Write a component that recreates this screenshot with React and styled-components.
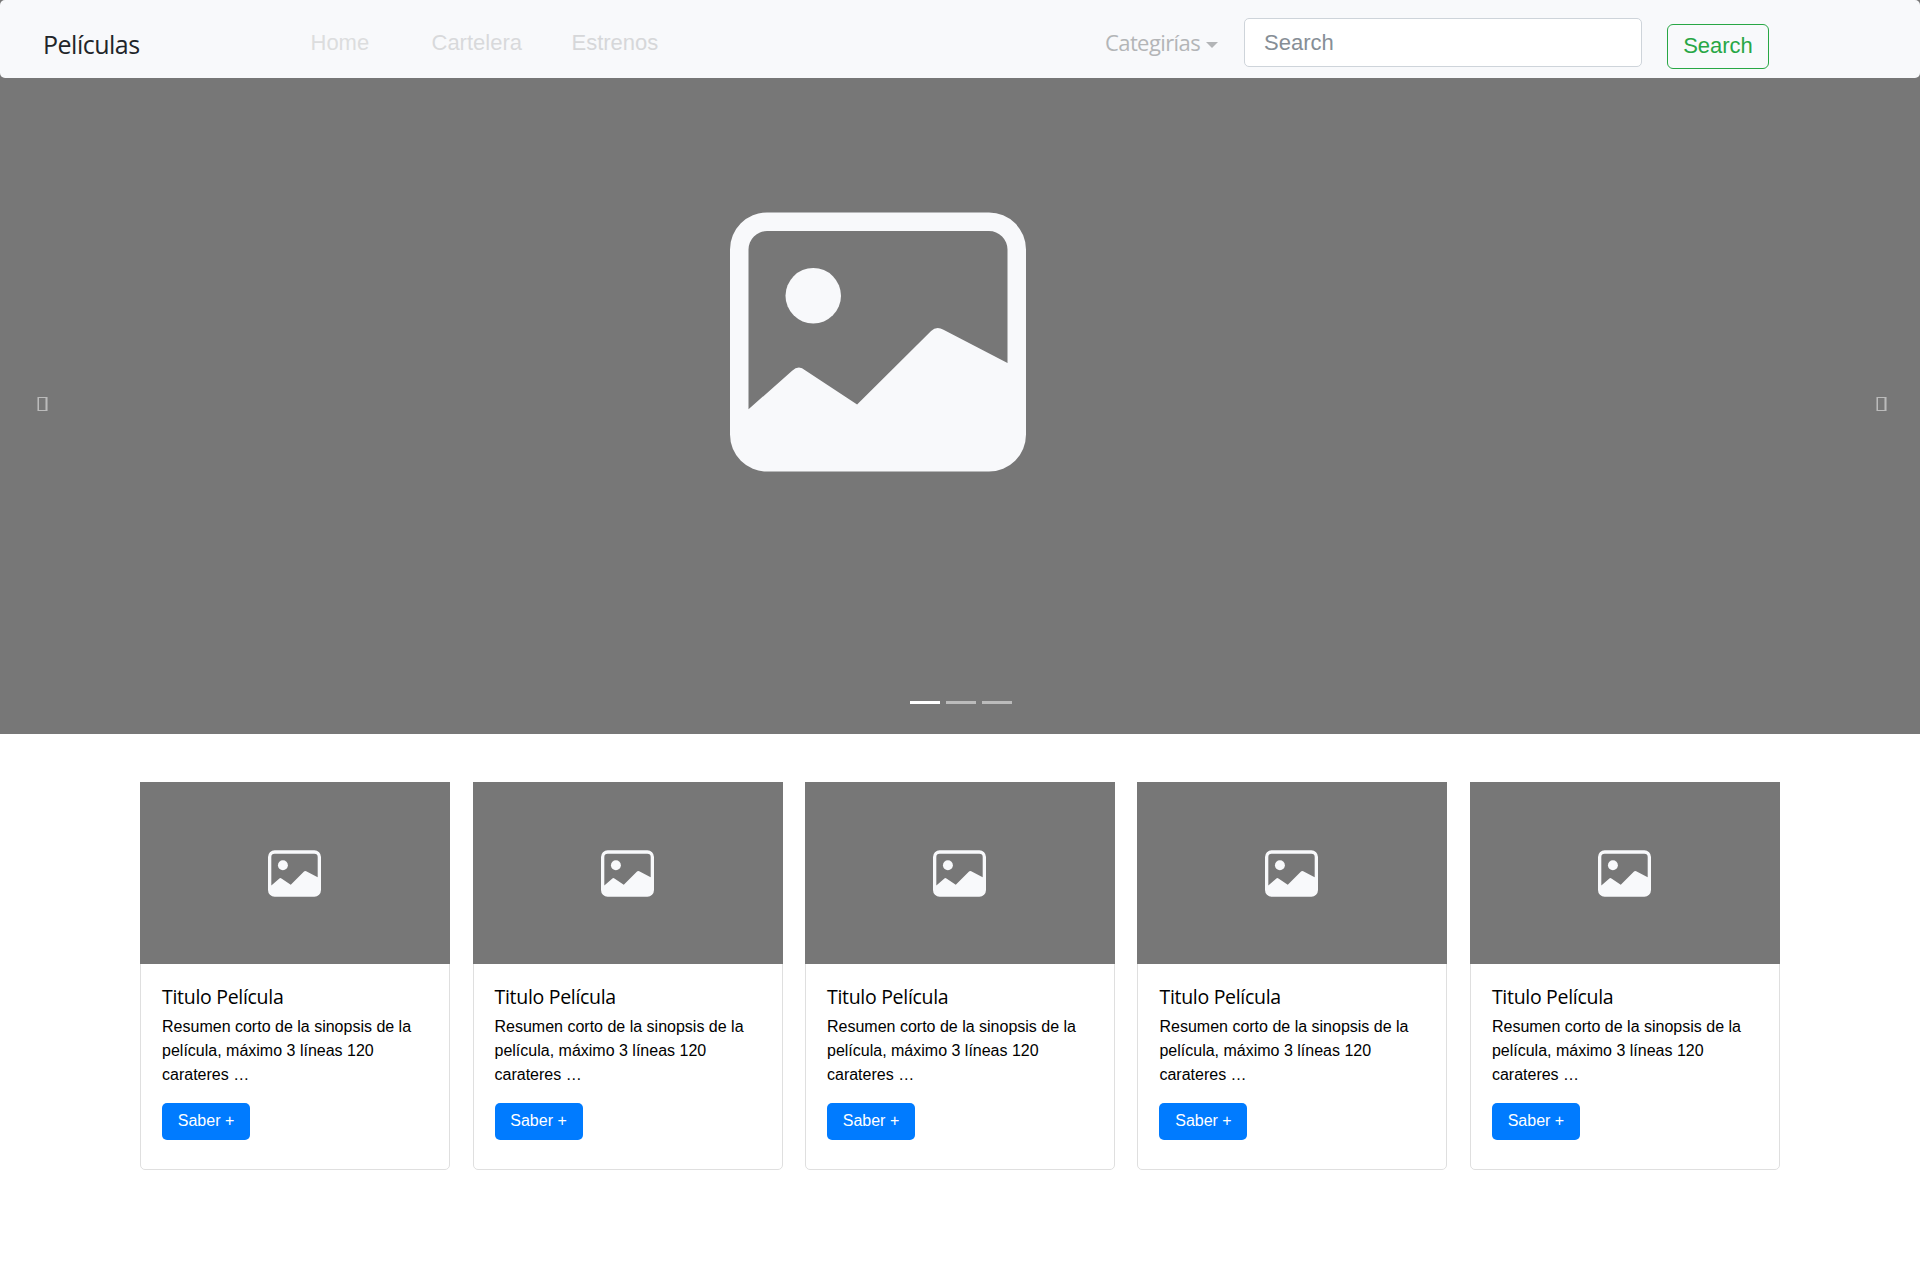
import React from 'react';
import styled, { createGlobalStyle } from 'styled-components';

const GlobalStyle = createGlobalStyle`
  *, *::before, *::after { box-sizing: border-box; }
  body {
    margin: 0;
    background: #fff;
    color: #000;
    font: 16px/24px "Liberation Sans", Arial, sans-serif;
  }
  h5, p { margin: 0; }
`;

const humanist = '"Open Sans", "Noto Sans", sans-serif';

const Hero = styled.header`
  height: 734px;
  background: #777;
  display: flex;
  flex-direction: column;
`;

const Navbar = styled.nav`
  height: 78px;
  flex: none;
  border-radius: 5px;
  background: #f8f9fb;
  display: flex;
  align-items: flex-start;
  padding-left: 43px;
`;

const Brand = styled.a`
  width: 267.5px;
  margin-top: 26px;
  font: 400 25px/36px ${humanist};
  letter-spacing: -0.5px;
  color: #212529;
`;

const Links = styled.div`
  display: flex;
  width: 794.5px;
  margin-top: 27px;
`;

const NavLink = styled.a`
  width: ${(p) => p.$width}px;
  font-size: 22px;
  line-height: 32px;
  color: ${(p) => p.$color};
`;

const Dropdown = styled.a`
  display: flex;
  align-items: center;
  width: 139px;
  margin-top: 27px;
  font: 400 22px/32px ${humanist};
  color: #b3b5b7;
`;

const DropdownLabel = styled.span`
  width: 101px;
  margin-top: -1px;
  letter-spacing: -0.6px;
`;

const Caret = styled.span`
  margin-top: 4px;
  border: 6px solid transparent;
  border-top-color: #b3b5b7;
  border-bottom: 0;
`;

const SearchInput = styled.input`
  width: 398px;
  height: 49px;
  margin: 18px 25px 0 0;
  padding: 0 19px;
  border: 1px solid #ced4da;
  border-radius: 5px;
  background: #fff;
  font: 22px/32px "Liberation Sans", Arial, sans-serif;
  &::placeholder { color: #868e96; opacity: 1; }
`;

const SearchButton = styled.button`
  width: 102px;
  height: 45px;
  margin-top: 24px;
  padding: 0 0 2px;
  border: 1px solid #28a745;
  border-radius: 6px;
  background: transparent;
  color: #28a745;
  font: 22px/32px "Liberation Sans", Arial, sans-serif;
`;

const Carousel = styled.section`
  flex: 1;
  display: grid;
  grid-template-columns: 48px 1fr 48px;
  padding: 0 22px;
`;

const Control = styled.a`
  display: flex;
  padding: 319px 0 0 ${(p) => p.$indent}px;
`;

const Slide = styled.div`
  display: flex;
  flex-direction: column;
  align-items: center;
  justify-content: space-between;
  padding: 115.5px 0 30px;
`;

const SlidePicture = styled.div`
  margin-right: 164px;
  height: 296px;
`;

const Indicators = styled.div`
  display: flex;
  gap: 6px;
  margin-left: 2px;
`;

const Indicator = styled.span`
  width: 30px;
  height: 3px;
  background: ${(p) => (p.$active ? '#fff' : '#bbb')};
`;

const Cards = styled.main`
  width: 1639.9px;
  margin: 48px auto 0;
  display: grid;
  grid-template-columns: repeat(5, 310px);
  justify-content: space-between;
`;

const Card = styled.article`
  height: 388px;
  border: 1px solid #dfdfdf;
  border-radius: 5px;
`;

const CardPicture = styled.div`
  height: 182px;
  margin: -1px -1px 0;
  padding-right: 1px;
  background: #777;
  display: flex;
  align-items: center;
  justify-content: center;
`;

const CardBody = styled.div`
  padding: 19px 21px;
`;

const CardTitle = styled.h5`
  font: 400 19.5px/28px ${humanist};
  letter-spacing: -0.3px;
`;

const CardText = styled.p`
  margin: 4px 0 16px;
`;

const CardButton = styled.button`
  width: 88px;
  height: 37px;
  padding: 0 0 1px;
  border: 0;
  border-radius: 5px;
  background: #007bff;
  color: #fff;
  font: 16px/24px "Liberation Sans", Arial, sans-serif;
`;

const Svg = styled.svg`
  display: block;
  flex: none;
`;

const PictureIcon = ({ size }) => (
  <Svg width={size} height={size} viewBox="0 0 16 16" fill="#f8f9fb">
    <path
      fillRule="evenodd"
      d="M2 1h12a2 2 0 0 1 2 2v10a2 2 0 0 1-2 2H2a2 2 0 0 1-2-2V3a2 2 0 0 1 2-2zm0 1a1 1 0 0 0-1 1v8.64L3.36 9.55Q3.72 9.22 4.06 9.53L6.87 11.38L10.87 7.4Q11.17 7.11 11.54 7.34L15 9.13V3a1 1 0 0 0-1-1z"
    />
    <circle cx="4.5" cy="5.5" r="1.5" />
  </Svg>
);

const ArrowGlyph = () => (
  <Svg width="11" height="14" viewBox="0 0 11 14">
    <path d="M0 0h2v14H0zM8 0h3v14H8z" fill="#9b9b9b" />
    <path d="M1 0h9v1H1zM1 13h9v1H1zM1 0h1v14H1zM9 0h1v14H9z" fill="#bbb" />
  </Svg>
);

const links = [
  { label: 'Home', width: 121, color: '#dcddde' },
  { label: 'Cartelera', width: 140, color: '#d8d9db' },
  { label: 'Estrenos', width: 100, color: '#d6d7d9' },
];

export default function App() {
  return (
    <>
      <GlobalStyle />
      <Hero>
        <Navbar>
          <Brand>Películas</Brand>
          <Links>
            {links.map((l) => (
              <NavLink key={l.label} $width={l.width} $color={l.color}>{l.label}</NavLink>
            ))}
          </Links>
          <Dropdown>
            <DropdownLabel>Categirías</DropdownLabel>
            <Caret />
          </Dropdown>
          <SearchInput placeholder="Search" />
          <SearchButton>Search</SearchButton>
        </Navbar>
        <Carousel>
          <Control $indent={15}><ArrowGlyph /></Control>
          <Slide>
            <SlidePicture><PictureIcon size={296} /></SlidePicture>
            <Indicators>
              <Indicator $active />
              <Indicator />
              <Indicator />
            </Indicators>
          </Slide>
          <Control $indent={26}><ArrowGlyph /></Control>
        </Carousel>
      </Hero>
      <Cards>
        {[1, 2, 3, 4, 5].map((id) => (
          <Card key={id}>
            <CardPicture><PictureIcon size={53} /></CardPicture>
            <CardBody>
              <CardTitle>Titulo Película</CardTitle>
              <CardText>Resumen corto de la sinopsis de la película, máximo 3 líneas 120 carateres …</CardText>
              <CardButton>Saber +</CardButton>
            </CardBody>
          </Card>
        ))}
      </Cards>
    </>
  );
}
